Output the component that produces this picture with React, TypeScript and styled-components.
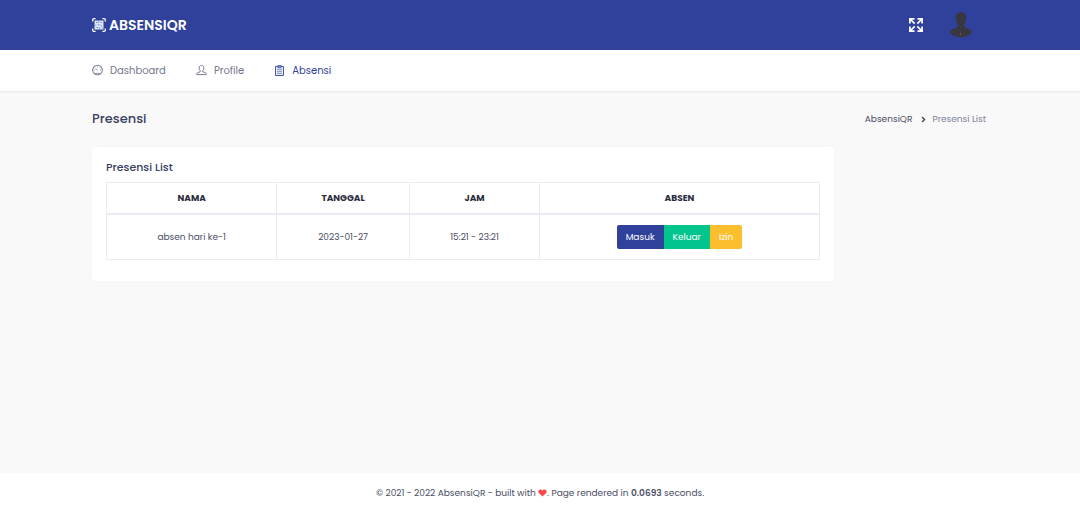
import React from "react";
import styled, { createGlobalStyle } from "styled-components";

const GlobalStyle = createGlobalStyle`
  *, *::before, *::after { box-sizing: border-box; }
  body {
    margin: 0;
    background: #f9f9f9;
    color: #4a4d63;
    font-family: Poppins, Inter, "Liberation Sans", sans-serif;
    font-size: 9px;
    line-height: 14px;
  }
  a { color: inherit; text-decoration: none; }
`;

const Page = styled.div`
  display: flex;
  flex-direction: column;
  min-height: 100vh;
`;

const Container = styled.div`
  width: 85%;
  margin: 0 auto;
  padding: 0 11px;
`;

const Header = styled.header`
  background: #30419b;
  color: #fff;
`;

const HeaderRow = styled(Container)`
  display: flex;
  align-items: center;
  justify-content: space-between;
  height: 50px;
`;

const Brand = styled.a`
  display: flex;
  align-items: center;
  gap: 3px;
  font-size: 14px;
  line-height: 20px;
  font-weight: 600;
`;

const HeaderActions = styled.div`
  display: flex;
  align-items: center;
  gap: 26px;
  padding-right: 15px;
`;

const IconButton = styled.button`
  display: flex;
  padding: 0;
  border: 0;
  background: none;
  color: inherit;
  cursor: pointer;
`;

const Nav = styled.nav`
  background: #fff;
  border-bottom: 1px solid #ececee;
  box-shadow: 0 1px 1px #f2f2f3;
`;

const NavList = styled(Container)`
  display: flex;
  gap: 30px;
  height: 41px;
  align-items: center;
`;

const NavLink = styled.a<{ $active?: boolean }>`
  display: flex;
  align-items: center;
  gap: 7px;
  font-size: 10px;
  line-height: 16px;
  color: ${(p) => (p.$active ? "#30419b" : "#74788d")};
`;

const Main = styled.main`
  flex: 1;
`;

const TitleRow = styled.div`
  display: flex;
  align-items: center;
  justify-content: space-between;
  padding: 17px 2px 18px 0;
`;

const PageTitle = styled.h1`
  margin: 0;
  font-size: 13px;
  line-height: 20px;
  font-weight: 500;
  color: #3a4062;
`;

const Breadcrumb = styled.nav`
  display: flex;
  align-items: center;
  gap: 6px;
`;

const Crumb = styled.a`
  color: #4a4d63;
  margin-right: 3px;
`;

const CurrentCrumb = styled.span`
  color: #7e8299;
`;

const Card = styled.section`
  width: calc(83.33% - 5px);
  padding: 12px 14px 21px;
  background: #fff;
  border-radius: 2px;
  box-shadow: 0 0 10px 1px #f4f7f6;
`;

const CardTitle = styled.h2`
  margin: 0 0 7px;
  font-size: 11px;
  line-height: 16px;
  font-weight: 500;
  color: #3a4062;
`;

const Table = styled.table`
  width: 100%;
  table-layout: fixed;
  border-collapse: collapse;
  text-align: center;
`;

const HeadCell = styled.th<{ $width: string }>`
  width: ${(p) => p.$width};
  height: 31px;
  padding: 0 8px;
  border: 1px solid #e9ecf2;
  border-bottom-width: 2px;
  color: #2a2c3c;
  font-weight: 700;
`;

const Cell = styled.td`
  height: 46px;
  padding: 0 8px;
  border: 1px solid #e9ecf2;
`;

const ButtonGroup = styled.div`
  display: inline-flex;
  border-radius: 2px;
  overflow: hidden;
  vertical-align: middle;
`;

const ActionButton = styled.button<{ $color: string }>`
  height: 24px;
  padding: 0 9px;
  border: 0;
  background: ${(p) => p.$color};
  color: #fff;
  font: inherit;
  cursor: pointer;
`;

const Footer = styled.footer`
  padding: 13px 11px;
  background: #fff;
  text-align: center;
`;

const Heart = styled.svg`
  vertical-align: -1px;
`;

const FooterStrong = styled.strong`
  font-weight: 600;
`;

const QrIcon = () => (
  <svg width="14" height="14" viewBox="0 0 14 14" fill="none" stroke="#fff" aria-hidden="true">
    <path d="M.7 3.600V2q0-1.300 1.300-1.300h1.600M10.400.7H12q1.300 0 1.300 1.300v1.600M13.300 10.400V12q0 1.300-1.300 1.300h-1.600M3.600 13.300H2Q.7 13.300.7 12v-1.600" strokeWidth="1.300" />
    <path d="M2.500 2.500h9v9h-9z" fill="#dbe6f8" stroke="none" />
    <path d="M4 4.500h1.500M4.500 9.500h1.500M8.800 4.500h1.200M6.800 3.200v1.600M5.800 6.800h1.800M8.600 7.200l1.400 1M7.500 9.400v1.600M3.200 7.200h1M9.800 10h1" stroke="#5b76b8" strokeWidth=".8" />
  </svg>
);

const ExpandIcon = () => (
  <svg width="14" height="14" viewBox="0 0 14 14" fill="none" stroke="#fff" strokeWidth="1.700" aria-hidden="true">
    <path d="M.9 5.500V.9h4.600M8.500.9h4.600v4.600M13.100 8.500v4.600H8.500M5.500 13.100H.9V8.500M1 1l4.700 4.700M13 1 8.300 5.700M13 13 8.300 8.300M1 13l4.700-4.700" />
  </svg>
);

const AvatarImage = () => (
  <svg width="24" height="26" viewBox="0 0 24 26" aria-hidden="true">
    <path d="M12 .5c3.300 0 5.200 2 5 5.200.3 2-.2 4.300-1.600 6v3c.5 1.800 6.200 1.800 7.600 4.800.1 1-.6 1.200-1 1.800-1 2.200-5 4-10 4s-9-1.800-10-4c-.4-.6-1.100-.8-1-1.800 1.400-3 7.100-3 7.600-4.800v-3C7.200 10 6.700 7.700 7 5.700 6.800 2.500 8.700.5 12 .5z" fill="#38353b" />
    <g fill="#3b4a86">
      {[[10, 4], [14, 4], [12, 6.5], [9, 8], [15, 8], [12, 10], [10, 13], [14, 13], [12, 15.5], [8, 17.5], [16, 17.5], [4, 20], [8, 21], [16, 21], [20, 20], [12, 19], [6, 23], [18, 23], [10, 23.5], [14, 23.5]].map(([x, y]) => (
        <circle key={`${x}-${y}`} cx={x} cy={y} r=".6" />
      ))}
    </g>
    <circle cx="11.500" cy="22" r=".7" fill="#b5613f" />
  </svg>
);

const DashboardIcon = () => (
  <svg width="11" height="14" viewBox="0 0 11 14" fill="none" stroke="#7c8093" aria-hidden="true">
    <circle cx="5.500" cy="6" r="4.800" strokeWidth="1.100" />
    <path d="M3.200 4 5.800 6.500M2.200 6h.8M5.500 2.500v.9M8 3.700l-.5.600M8.800 6H8M3 9.700q2.500-1 5 0" strokeWidth=".8" />
  </svg>
);

const ProfileIcon = () => (
  <svg width="11" height="14" viewBox="0 0 11 14" fill="none" stroke="#7c8093" strokeWidth="1" aria-hidden="true">
    <path d="M5.500 1.400c1.700 0 2.400 1.100 2.400 2.600 0 1.400-.6 2.300-1.300 2.900v.8l3 1c.6.3.8.8.8 1.900H.6c0-1.100.2-1.600.8-1.900l3-1v-.8C3.700 6.300 3.100 5.400 3.100 4c0-1.500.7-2.600 2.400-2.600z" />
  </svg>
);

const ClipboardIcon = () => (
  <svg width="11" height="14" viewBox="0 0 11 14" fill="none" stroke="#4658a5" aria-hidden="true">
    <path d="M3.500 2.500h-2v9h8v-9h-2" strokeWidth="1" fill="#e5edf8" />
    <path d="M3.700 1.600h3.600v1.800H3.700z" strokeWidth=".9" fill="#8796c6" />
    <path d="M3 5.300h5M3 7.300h5M3 9.300h5" strokeWidth=".8" stroke="#6f7896" />
  </svg>
);

const ChevronIcon = () => (
  <svg width="5" height="7" viewBox="0 0 5 7" fill="none" stroke="#3e4259" strokeWidth="1.300" aria-hidden="true">
    <path d="m1 1 2.600 2.500L1 6" />
  </svg>
);

const columns = [
  { label: "NAMA", width: "23.9%" },
  { label: "TANGGAL", width: "18.6%" },
  { label: "JAM", width: "18.3%" },
  { label: "ABSEN", width: "39.2%" },
];

export default function App() {
  return (
    <Page>
      <GlobalStyle />
      <Header>
        <HeaderRow>
          <Brand href="#">
            <QrIcon />
            ABSENSIQR
          </Brand>
          <HeaderActions>
            <IconButton type="button" aria-label="Toggle fullscreen">
              <ExpandIcon />
            </IconButton>
            <IconButton type="button" aria-label="Account menu">
              <AvatarImage />
            </IconButton>
          </HeaderActions>
        </HeaderRow>
      </Header>
      <Nav aria-label="Main">
        <NavList>
          <NavLink href="#dashboard">
            <DashboardIcon />
            Dashboard
          </NavLink>
          <NavLink href="#profile">
            <ProfileIcon />
            Profile
          </NavLink>
          <NavLink href="#absensi" $active aria-current="page">
            <ClipboardIcon />
            Absensi
          </NavLink>
        </NavList>
      </Nav>
      <Main>
        <Container>
          <TitleRow>
            <PageTitle>Presensi</PageTitle>
            <Breadcrumb aria-label="Breadcrumb">
              <Crumb href="#">AbsensiQR</Crumb>
              <ChevronIcon />
              <CurrentCrumb>Presensi List</CurrentCrumb>
            </Breadcrumb>
          </TitleRow>
          <Card>
            <CardTitle>Presensi List</CardTitle>
            <Table>
              <thead>
                <tr>
                  {columns.map((c) => (
                    <HeadCell key={c.label} scope="col" $width={c.width}>
                      {c.label}
                    </HeadCell>
                  ))}
                </tr>
              </thead>
              <tbody>
                <tr>
                  <Cell>absen hari ke-1</Cell>
                  <Cell>2023-01-27</Cell>
                  <Cell>15:21 - 23:21</Cell>
                  <Cell>
                    <ButtonGroup role="group" aria-label="Absen">
                      <ActionButton type="button" $color="#30419b">Masuk</ActionButton>
                      <ActionButton type="button" $color="#02c58d">Keluar</ActionButton>
                      <ActionButton type="button" $color="#fcbe2d">Izin</ActionButton>
                    </ButtonGroup>
                  </Cell>
                </tr>
              </tbody>
            </Table>
          </Card>
        </Container>
      </Main>
      <Footer>
        © 2021 - 2022 AbsensiQR - built with{" "}
        <Heart width="9" height="8" viewBox="0 0 9 8" role="img" aria-label="love">
          <path d="M4.500 7.600.8 4C-.4 2.500.5.400 2.400.400c1 0 1.700.5 2.100 1.200C4.900.9 5.600.4 6.600.4c1.900 0 2.800 2.100 1.600 3.600z" fill="#fb4a4a" />
        </Heart>
        . Page rendered in <FooterStrong>0.0693</FooterStrong> seconds.
      </Footer>
    </Page>
  );
}
